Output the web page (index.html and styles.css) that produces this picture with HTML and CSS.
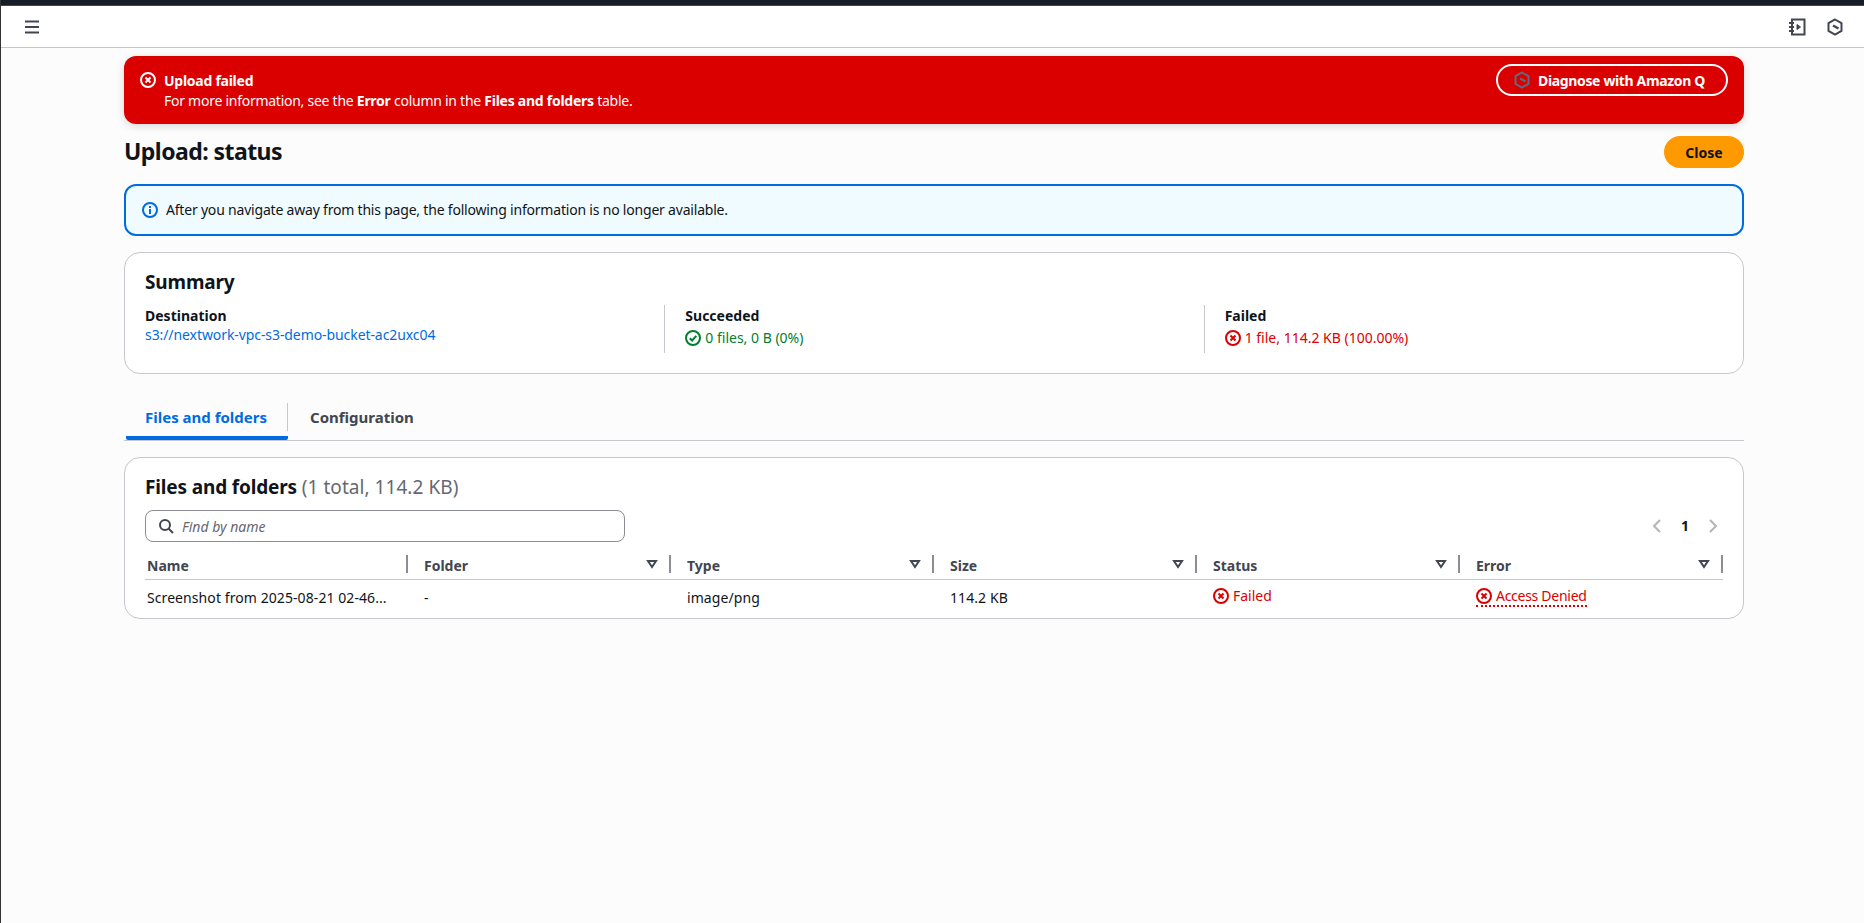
FILE: index.html
```html
<!DOCTYPE html>
<html lang="en">

<head>
    <meta charset="UTF-8" />
    <meta name="viewport" content="width=device-width, initial-scale=1.0" />
    <title>Upload: status</title>
    <link rel="stylesheet" href="styles.css">
</head>

<body>
    <div class="top-strip"></div>

    <header class="nav">
        <button class="icon-btn" aria-label="Menu">
            <svg width="16" height="16" viewBox="0 0 16 16" class="stroke-icon"><path d="M1 2.500h14M1 8h14M1 13.500h14" /></svg>
        </button>
        <div class="nav-right">
            <button class="icon-btn" aria-label="Notes">
                <svg width="18" height="18" viewBox="0 0 18 18" class="stroke-icon"><path d="M4 1.500h12.500v15H4zM1 5h5M1 9h5M1 13h5" /><path d="M9 6.500l3.500 2.500L9 11.500z" class="filled" /></svg>
            </button>
            <button class="icon-btn" aria-label="Amazon Q">
                <svg width="18" height="18" viewBox="0 0 18 18" class="stroke-icon"><path d="M9 1.500l6.500 3.700v7.600L9 16.500l-6.500-3.700V5.200z" /><path d="M7 7.500l5.500 3" class="thick" /></svg>
            </button>
        </div>
    </header>

    <main class="content">
        <div class="flash">
            <svg width="16" height="16" viewBox="0 0 16 16" class="status-icon"><circle cx="8" cy="8" r="7" /><path d="M5.500 5.500l5 5M10.500 5.500l-5 5" /></svg>
            <div class="flash-text">
                <div class="flash-title">Upload failed</div>
                <div>For more information, see the <b>Error</b> column in the <b>Files and folders</b> table.</div>
            </div>
            <button class="diagnose">
                <svg width="18" height="18" viewBox="0 0 18 18" class="q-icon"><path d="M9 1.500l6.500 3.700v7.600L9 16.500l-6.500-3.700V5.200z" /><path d="M7 7.500l5.500 3" /></svg>
                Diagnose with Amazon Q
            </button>
        </div>

        <div class="page-head">
            <h1>Upload: status</h1>
            <button class="btn-primary">Close</button>
        </div>

        <div class="info">
            <svg width="16" height="16" viewBox="0 0 16 16" class="status-icon"><circle cx="8" cy="8" r="7" /><path d="M8 7v5M8 4v2" /></svg>
            <span>After you navigate away from this page, the following information is no longer available.</span>
        </div>

        <section class="card summary">
            <h2>Summary</h2>
            <div class="summary-grid">
                <div class="summary-col">
                    <div class="label">Destination</div>
                    <a href="#" class="link">s3://nextwork-vpc-s3-demo-bucket-ac2uxc04</a>
                </div>
                <div class="summary-col">
                    <div class="label">Succeeded</div>
                    <div class="state ok">
                        <svg width="16" height="16" viewBox="0 0 16 16" class="status-icon"><circle cx="8" cy="8" r="7" /><path d="M4.800 8.200l2.300 2.300 4.200-4.700" /></svg>
                        0 files, 0 B (0%)
                    </div>
                </div>
                <div class="summary-col">
                    <div class="label">Failed</div>
                    <div class="state bad">
                        <svg width="16" height="16" viewBox="0 0 16 16" class="status-icon"><circle cx="8" cy="8" r="7" /><path d="M5.500 5.500l5 5M10.500 5.500l-5 5" /></svg>
                        1 file, 114.2 KB (100.00%)
                    </div>
                </div>
            </div>
        </section>

        <nav class="tabs">
            <a href="#" class="tab active">Files and folders</a>
            <a href="#" class="tab">Configuration</a>
        </nav>

        <section class="card files">
            <h2>Files and folders <span class="count">(1 total, 114.2 KB)</span></h2>
            <div class="toolbar">
                <div class="search">
                    <svg width="16" height="16" viewBox="0 0 16 16" class="search-icon"><circle cx="7" cy="7" r="5" /><path d="M10.500 10.500L15 15" /></svg>
                    <input type="text" placeholder="Find by name" />
                </div>
                <div class="pager">
                    <svg width="16" height="16" viewBox="0 0 16 16" class="chevron"><path d="M11 2L5 8l6 6" /></svg>
                    <span>1</span>
                    <svg width="16" height="16" viewBox="0 0 16 16" class="chevron"><path d="M5 2l6 6-6 6" /></svg>
                </div>
            </div>
            <table>
                <thead>
                    <tr>
                        <th>Name</th>
                        <th>Folder <svg width="12" height="10" viewBox="0 0 12 10" class="sort-icon"><path d="M2 2h8L6 8z" /></svg></th>
                        <th>Type <svg width="12" height="10" viewBox="0 0 12 10" class="sort-icon"><path d="M2 2h8L6 8z" /></svg></th>
                        <th>Size <svg width="12" height="10" viewBox="0 0 12 10" class="sort-icon"><path d="M2 2h8L6 8z" /></svg></th>
                        <th>Status <svg width="12" height="10" viewBox="0 0 12 10" class="sort-icon"><path d="M2 2h8L6 8z" /></svg></th>
                        <th>Error <svg width="12" height="10" viewBox="0 0 12 10" class="sort-icon"><path d="M2 2h8L6 8z" /></svg></th>
                    </tr>
                </thead>
                <tbody>
                    <tr>
                        <td>Screenshot from 2025-08-21 02-46...</td>
                        <td>-</td>
                        <td>image/png</td>
                        <td>114.2 KB</td>
                        <td>
                            <span class="state bad">
                                <svg width="16" height="16" viewBox="0 0 16 16" class="status-icon"><circle cx="8" cy="8" r="7" /><path d="M5.500 5.500l5 5M10.500 5.500l-5 5" /></svg>
                                Failed
                            </span>
                        </td>
                        <td>
                            <span class="state bad dotted">
                                <svg width="16" height="16" viewBox="0 0 16 16" class="status-icon"><circle cx="8" cy="8" r="7" /><path d="M5.500 5.500l5 5M10.500 5.500l-5 5" /></svg>
                                Access Denied
                            </span>
                        </td>
                    </tr>
                </tbody>
            </table>
        </section>
    </main>
</body>

</html>
```

FILE: styles.css
```css
/* Page */

* {
    box-sizing: border-box;
}

body {
    font-family: "Noto Sans", sans-serif;
    font-size: 14px;
    line-height: 20px;
    color: #0f141a;
    background: #fcfcfc;
    margin: 0;
    min-height: 923px;
    border-left: 1px solid #333;
}

svg {
    flex: none;
    fill: none;
    stroke: currentColor;
    stroke-width: 2;
}

button {
    font-family: inherit;
}

/* Top bar */

.top-strip {
    height: 6px;
    background: #161d26;
    border-bottom: 1px solid #424650;
}

.nav {
    height: 42px;
    background: #fff;
    border-bottom: 1px solid #c6c6cd;
    display: flex;
    align-items: center;
    justify-content: space-between;
    padding: 0 20px 0 23px;
}

.nav-right {
    display: flex;
    gap: 20px;
}

.icon-btn {
    background: none;
    border: none;
    padding: 0;
    display: flex;
    color: #424650;
}

.stroke-icon .filled {
    fill: currentColor;
    stroke-width: 1;
}

.stroke-icon .thick {
    stroke-width: 2.500;
}

/* Flash */

.content {
    width: 1620px;
    margin-left: 123px;
    padding-top: 8px;
}

.flash {
    height: 68px;
    background: #db0000;
    color: #fff;
    border-radius: 12px;
    box-shadow: 0 2px 8px rgba(0, 0, 0, 0.15);
    display: flex;
    align-items: flex-start;
    padding: 15px 16px 0 16px;
    gap: 8px;
}

.flash .status-icon {
    margin-top: 1px;
}

.flash-text {
    flex: 1;
    letter-spacing: -0.26px;
}

.flash-title {
    font-weight: 700;
}

.diagnose {
    width: 232px;
    height: 32px;
    margin-top: -7px;
    padding: 0 6px 0 0;
    background: none;
    color: #fff;
    border: 2px solid #fff;
    border-radius: 20px;
    font-size: 14px;
    font-weight: 700;
    letter-spacing: -0.35px;
    display: flex;
    align-items: center;
    justify-content: center;
    gap: 7px;
}

.q-icon {
    color: #5f6b7a;
}

/* Page header */

.page-head {
    display: flex;
    justify-content: space-between;
    align-items: center;
    margin-top: 12px;
    height: 32px;
}

h1 {
    font-size: 23px;
    line-height: 30px;
    font-weight: 700;
    letter-spacing: -0.55px;
    margin: 0 0 2px;
}

.btn-primary {
    width: 80px;
    height: 32px;
    background: #ff9900;
    color: #0f141a;
    border: none;
    border-radius: 20px;
    font-size: 14px;
    font-weight: 700;
}

/* Info alert */

.info {
    height: 52px;
    margin-top: 16px;
    background: #f0fbff;
    border: 2px solid #006ce0;
    border-radius: 12px;
    display: flex;
    align-items: center;
    gap: 8px;
    padding: 0 16px;
    letter-spacing: -0.2px;
}

.info .status-icon {
    color: #006ce0;
}

/* Cards */

.card {
    background: #fff;
    border: 1px solid #c6c6cd;
    border-radius: 16px;
    padding: 0 20px;
}

h2 {
    font-size: 19px;
    line-height: 24px;
    font-weight: 700;
    letter-spacing: -0.15px;
    margin: 0;
}

.summary {
    height: 122px;
    margin-top: 16px;
    padding-top: 17px;
}

.summary-grid {
    display: grid;
    grid-template-columns: repeat(3, 1fr);
    gap: 40px;
    margin-top: 11px;
}

.summary-col {
    min-height: 48px;
}

.summary-col + .summary-col {
    border-left: 1px solid #c6c6cd;
    margin-left: -20px;
    padding-left: 20px;
}

.label {
    font-weight: 700;
    padding-top: 1px;
    margin-bottom: -1px;
}

.link {
    color: #006ce0;
    text-decoration: none;
    letter-spacing: -0.08px;
}

.state {
    display: flex;
    align-items: center;
    gap: 4px;
    margin-top: 3px;
}

.ok {
    color: #00802f;
}

.bad {
    color: #db0000;
}

/* Tabs */

.tabs {
    display: flex;
    margin-top: 26px;
    height: 41px;
    border-bottom: 1px solid #c6c6cd;
    padding-left: 2px;
}

.tab {
    position: relative;
    height: 40px;
    padding: 5px 20px 0 22px;
    font-size: 15px;
    line-height: 24px;
    font-weight: 700;
    white-space: nowrap;
    color: #424650;
    text-decoration: none;
}

.tab.active {
    color: #006ce0;
    width: 162px;
    padding-left: 19px;
    border-bottom: 4px solid #006ce0;
    border-radius: 0 0 2px 2px;
}

.tab.active::after {
    content: "";
    position: absolute;
    top: 3px;
    right: 0;
    width: 1px;
    height: 28px;
    background: #c6c6cd;
}

/* Files table */

.files {
    height: 162px;
    margin-top: 16px;
    padding-top: 17px;
}

.count {
    font-weight: 400;
    color: #656871;
    letter-spacing: 0.05px;
}

.toolbar {
    display: flex;
    justify-content: space-between;
    align-items: center;
    margin-top: 11px;
    height: 32px;
}

.search {
    width: 480px;
    height: 32px;
    border: 1px solid #8c8c94;
    border-radius: 8px;
    background: #fff;
    display: flex;
    align-items: center;
    gap: 6px;
    padding: 0 12px;
}

.search-icon {
    color: #424650;
}

.search input {
    flex: 1;
    border: none;
    outline: none;
    background: none;
    font-family: inherit;
    font-size: 14px;
}

.search input::placeholder {
    color: #656871;
    font-style: italic;
}

.pager {
    display: flex;
    align-items: center;
    gap: 16px;
    font-weight: 700;
    padding-right: 2px;
}

.chevron {
    color: #b4b4bb;
}

table {
    width: 100%;
    table-layout: fixed;
    border-collapse: collapse;
    margin-top: 8px;
}

th {
    position: relative;
    height: 29px;
    padding: 3px 0 0 16px;
    text-align: left;
    font-weight: 700;
    color: #424650;
    border-bottom: 1px solid #c6c6cd;
}

th:first-child,
td:first-child {
    padding-left: 2px;
}

th::after {
    content: "";
    position: absolute;
    top: 5px;
    right: 0;
    width: 2px;
    height: 18px;
    background: #8c8c94;
}

/* Sort triangle sits over the header cell */

.sort-icon {
    position: absolute;
    top: 9px;
    right: 13px;
    color: #424650;
}

td {
    height: 36px;
    padding: 1px 0 0 16px;
    white-space: nowrap;
    overflow: hidden;
    letter-spacing: 0.08px;
}

td .state {
    display: inline-flex;
    margin-top: 0;
    letter-spacing: 0;
}

td .dotted {
    border-bottom: 2px dotted #db0000;
    line-height: 18px;
    letter-spacing: -0.28px;
}
```
